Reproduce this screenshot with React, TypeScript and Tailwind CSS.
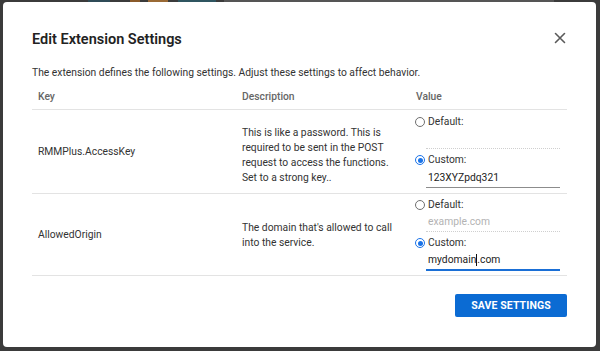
import React from "react";

type Setting = {
    keyName: string;
    description: string;
    defaultValue: string;
    customValue: string;
    focused: boolean;
};

const settings: Setting[] = [
    {
        keyName: "RMMPlus.AccessKey",
        description:
            "This is like a password. This is required to be sent in the POST request to access the functions. Set to a strong key..",
        defaultValue: "",
        customValue: "123XYZpdq321",
        focused: false,
    },
    {
        keyName: "AllowedOrigin",
        description: "The domain that's allowed to call into the service.",
        defaultValue: "example.com",
        customValue: "mydomain.com",
        focused: true,
    },
];

function Radio({ checked }: { checked: boolean }) {
    return checked ? (
        <span className="flex h-[10px] w-[10px] items-center justify-center rounded-full border-[1.5px] border-[#1a73e8] bg-white">
            <span className="h-[5px] w-[5px] rounded-full bg-[#1a73e8]" />
        </span>
    ) : (
        <span className="h-[10px] w-[10px] rounded-full border border-[#6f6f6f] bg-white" />
    );
}

function SettingRow({ s, first }: { s: Setting; first: boolean }) {
    return (
        <div className="grid grid-cols-[204px_174px_157px] border-b border-[#e3e3e3] text-[10.3px] text-[#333]">
            <div className="flex items-center pl-[6px]">{s.keyName}</div>
            <div className={`flex items-center pl-[6px] pr-[14px] leading-[15px] ${first ? "pt-[6px]" : ""}`}>
                {s.description}
            </div>
            <div className={`flex flex-col pl-[5px] pr-[7px] ${first ? "pt-[4px] pb-[5px]" : "pt-[3px] pb-[4px]"}`}>
                <div className="flex h-[16px] items-center gap-[3px]">
                    <Radio checked={false} />
                    <span>Default:</span>
                </div>
                <div className="ml-[11px] flex h-[19px] items-center border-b border-dotted border-[#cfcfcf] pl-[2px] text-[#b3b3b3]">
                    {s.defaultValue}
                </div>
                <div className="mt-[3px] flex h-[16px] items-center gap-[3px]">
                    <Radio checked={true} />
                    <span>Custom:</span>
                </div>
                <div
                    className={`ml-[11px] flex h-[20px] items-center pl-[2px] text-[#222] ${
                        s.focused ? "border-b-2 border-[#1a6fd6]" : "border-b-[1.5px] border-[#8c8c8c]"
                    }`}
                >
                    {s.focused ? (
                        <>
                            <span>mydomain</span>
                            <span className="h-[12px] w-px bg-[#111]" />
                            <span>.com</span>
                        </>
                    ) : (
                        s.customValue
                    )}
                </div>
            </div>
        </div>
    );
}

export default function App() {
    return (
        <div className="flex h-[351px] w-[600px] flex-col bg-[#3b3b3b] font-[family-name:Roboto,Arial,sans-serif]">
            {/* bits of the page behind the dialog */}
            <div className="flex h-[2px] shrink-0">
                <div className="w-[88px]" />
                <div className="w-[22px] bg-[#2f4b57]" />
                <div className="w-[20px]" />
                <div className="w-[10px] bg-[#8a5a2a]" />
                <div className="w-[8px]" />
                <div className="w-[20px] bg-[#9a6a35]" />
                <div className="w-[10px]" />
                <div className="w-[38px] bg-[#2f5560]" />
                <div className="w-[8px]" />
                <div className="w-[330px] bg-[#555]" />
            </div>
            <div className="ml-[3px] flex h-[345px] w-[593px] flex-col rounded-[4px] bg-white pt-[28px] pl-[29px] pr-[29px]">
                <div className="flex items-center justify-between">
                    <h2 className="text-[14.5px] leading-[20px] font-semibold text-[#222]">Edit Extension Settings</h2>
                    <svg width="12" height="12" viewBox="0 0 12 12" className="mr-[1px] mt-[-4px]">
                        <path d="M1.5 1.5 L10.5 10.5 M10.5 1.5 L1.5 10.5" stroke="#5a5a5a" strokeWidth="1.6" strokeLinecap="round" />
                    </svg>
                </div>
                <p className="mt-[15px] text-[10.3px] leading-[16px] text-[#333]">
                    The extension defines the following settings. Adjust these settings to affect behavior.
                </p>
                <div className="w-[535px]">
                    <div className="grid grid-cols-[204px_174px_157px] border-b border-[#e3e3e3] pt-[8px] pb-[4px] text-[10.3px] leading-[16px] font-medium text-[#666]">
                        <div className="pl-[6px]">Key</div>
                        <div className="pl-[6px]">Description</div>
                        <div className="pl-[6px]">Value</div>
                    </div>
                    {settings.map((s, i) => (
                        <SettingRow key={s.keyName} s={s} first={i === 0} />
                    ))}
                </div>
                <div className="mt-[18px] flex justify-end">
                    <button
                        type="button"
                        className="h-[23px] w-[112px] rounded-[2px] bg-[#0b6bd3] text-[10.5px] font-bold tracking-[0.1px] text-white"
                    >
                        SAVE SETTINGS
                    </button>
                </div>
            </div>
        </div>
    );
}
